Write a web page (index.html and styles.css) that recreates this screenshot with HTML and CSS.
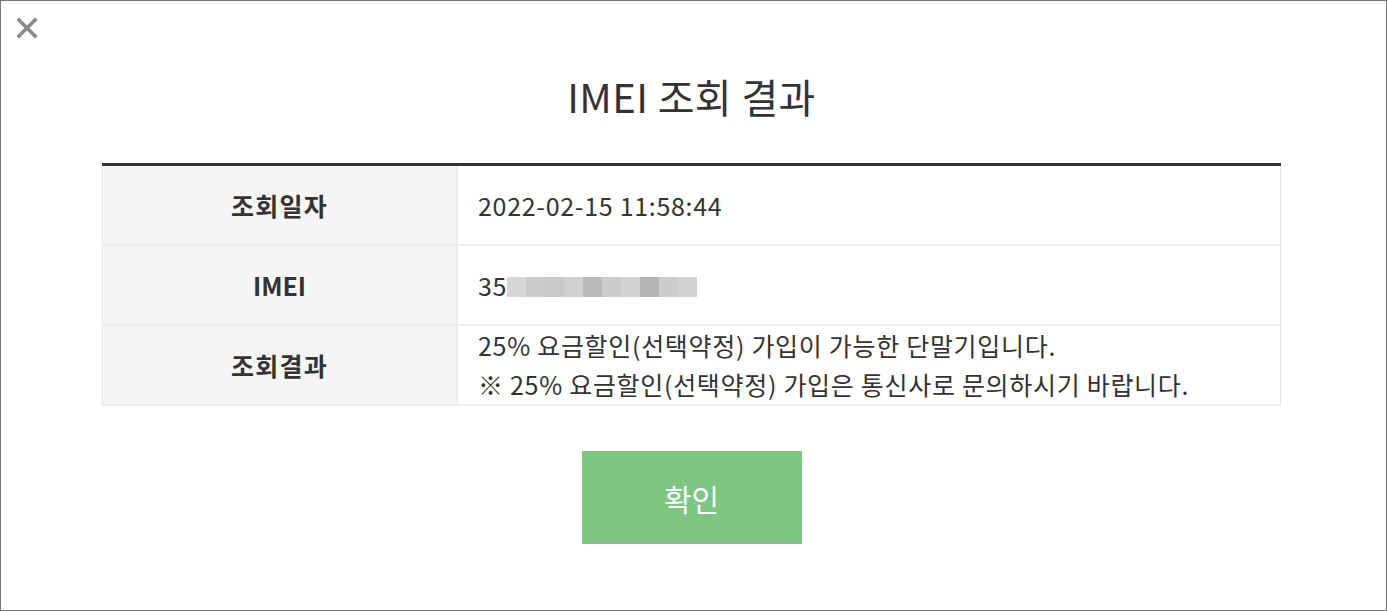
FILE: index.html
```html
<!DOCTYPE html>
<html>
<head>
    <title>IMEI 조회 결과</title>
    <meta name="viewport" content="width=device-width, initial-scale=1.0">
    <link rel="stylesheet" href="styles.css">
</head>
<body>
    <div class="popup">
        <button class="close" aria-label="닫기">
            <svg width="22" height="22" viewBox="0 0 22 22">
                <path d="M3 3 L19 19 M19 3 L3 19" stroke="#8a8a8a" stroke-width="3.6" stroke-linecap="square"/>
            </svg>
        </button>

        <h1 class="title">IMEI 조회 결과</h1>

        <table class="result">
            <tr>
                <th>조회일자</th>
                <td>2022-02-15 11:58:44</td>
            </tr>
            <tr>
                <th class="latin">IMEI</th>
                <td>35<span class="blur"><i></i><i></i><i></i><i></i><i></i><i></i><i></i><i></i><i></i><i></i></span></td>
            </tr>
            <tr>
                <th>조회결과</th>
                <td class="multi">
                    25% 요금할인(선택약정) 가입이 가능한 단말기입니다.<br>
                    ※ 25% 요금할인(선택약정) 가입은 통신사로 문의하시기 바랍니다.
                </td>
            </tr>
        </table>

        <div class="controls">
            <button class="confirm">확인</button>
        </div>
    </div>
</body>
</html>
```

FILE: styles.css
```css
html, body {
    margin: 0;
    padding: 0;
}

body {
    font-family: "Noto Sans CJK KR", "Noto Sans", sans-serif;
    color: #333;
    background-color: #fff;
}

.popup {
    position: relative;
    box-sizing: border-box;
    height: 611px;
    border: 1px solid #767676;
    padding: 0 105px 0 101px;
}

.close {
    position: absolute;
    top: 16px;
    left: 15px;
    padding: 0;
    border: none;
    background: transparent;
    width: 22px;
    height: 22px;
}

.title {
    margin: 0;
    padding-top: 67px;
    box-sizing: border-box;
    height: 162px;
    text-align: center;
    font-size: 40px;
    font-weight: 400;
    letter-spacing: 0.4px;
    line-height: 56px;
    color: #333;
}

.result {
    width: 100%;
    border-collapse: collapse;
    border-top: 3px solid #333;
    border-left: 1px solid #e6e6e6;
    border-right: 1px solid #e6e6e6;
}

.result th,
.result td {
    height: 78px;
    border-bottom: 2px solid #ececec;
    font-size: 25px;
    letter-spacing: 0.7px;
    padding: 0;
}

.result th {
    width: 353px;
    background-color: #f5f5f5;
    font-weight: 700;
    text-align: center;
    letter-spacing: 1.2px;
    border-right: 2px solid #ececec;
}

.result th.latin {
    letter-spacing: 0;
}

.result td {
    text-align: left;
    padding-left: 20px;
    font-weight: 400;
}

.result td.multi {
    line-height: 39px;
}

.blur {
    display: inline-flex;
    vertical-align: middle;
    height: 20px;
    margin-top: -4px;
}

.blur i {
    width: 19px;
    height: 20px;
    background-color: #cfcfcf;
}

.blur i:nth-child(1) { background-color: #d6d6d6; }
.blur i:nth-child(2) { background-color: #cbcbcb; }
.blur i:nth-child(3) { background-color: #c9c9c9; }
.blur i:nth-child(4) { background-color: #d0d0d0; }
.blur i:nth-child(5) { background-color: #b9b9b9; }
.blur i:nth-child(6) { background-color: #cccccc; }
.blur i:nth-child(7) { background-color: #d3d3d3; }
.blur i:nth-child(8) { background-color: #b5b5b5; }
.blur i:nth-child(9) { background-color: #cdcdcd; }
.blur i:nth-child(10) { background-color: #d4d4d4; }

.controls {
    display: flex;
    justify-content: center;
    padding-top: 45px;
}

.confirm {
    width: 220px;
    height: 93px;
    border: none;
    background-color: #7ec783;
    color: #fff;
    font-family: "Noto Sans CJK KR", "Noto Sans", sans-serif;
    font-size: 30px;
    padding: 0;
}
```
